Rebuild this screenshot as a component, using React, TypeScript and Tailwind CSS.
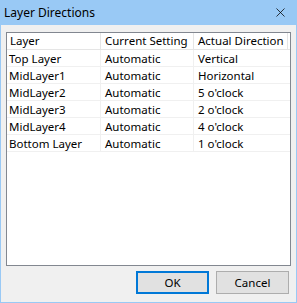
import { X } from 'lucide-react'

const rows = [
  ['Top Layer', 'Automatic', 'Vertical'],
  ['MidLayer1', 'Automatic', 'Horizontal'],
  ['MidLayer2', 'Automatic', "5 o'clock"],
  ['MidLayer3', 'Automatic', "2 o'clock"],
  ['MidLayer4', 'Automatic', "4 o'clock"],
  ['Bottom Layer', 'Automatic', "1 o'clock"],
]

export default function App() {
  return (
    <div className="w-[297px] h-[303px] bg-[#99c9f5] flex flex-col px-px pb-px text-[11.5px] text-black font-['Noto_Sans',sans-serif] whitespace-nowrap">
      <div className="h-[25px] flex items-center justify-between pl-[3px] pr-[8px] shrink-0">
        <span className="text-[12px]">Layer Directions</span>
        <X className="w-[15px] h-[15px]" strokeWidth={1.2} />
      </div>
      <div className="flex-1 bg-[#f0f0f0] flex flex-col px-[5px] pt-[7px] pb-[8px]">
        <div className="h-[234px] bg-white border border-[#828790] mb-[5px]">
          <div className="flex h-[17px] border-b border-[#e5e5e5] leading-[16px]">
            <div className="w-[94px] pl-[3px] border-r border-[#e5e5e5] overflow-hidden">Layer</div>
            <div className="w-[93px] pl-[4px] border-r border-[#e5e5e5] overflow-hidden">Current Setting</div>
            <div className="w-[94px] pl-[4px] border-r border-[#e5e5e5] overflow-hidden">Actual Direction</div>
          </div>
          {rows.map((r) => (
            <div key={r[0]} className="flex h-[17px] border-b border-[#f0f0f0] leading-[17px]">
              <div className="w-[94px] pl-[2px] border-r border-[#f0f0f0] overflow-hidden">{r[0]}</div>
              <div className="w-[93px] pl-[4px] border-r border-[#f0f0f0] overflow-hidden">{r[1]}</div>
              <div className="w-[94px] pl-[4px] overflow-hidden">{r[2]}</div>
            </div>
          ))}
        </div>
        <div className="flex justify-end gap-[7px] pr-[2px]">
          <button className="w-[73px] h-[23px] bg-[#e1e1e1] border-2 border-[#0078d7] leading-none">OK</button>
          <button className="w-[73px] h-[23px] bg-[#e1e1e1] border border-[#adadad] leading-none">Cancel</button>
        </div>
      </div>
    </div>
  )
}
